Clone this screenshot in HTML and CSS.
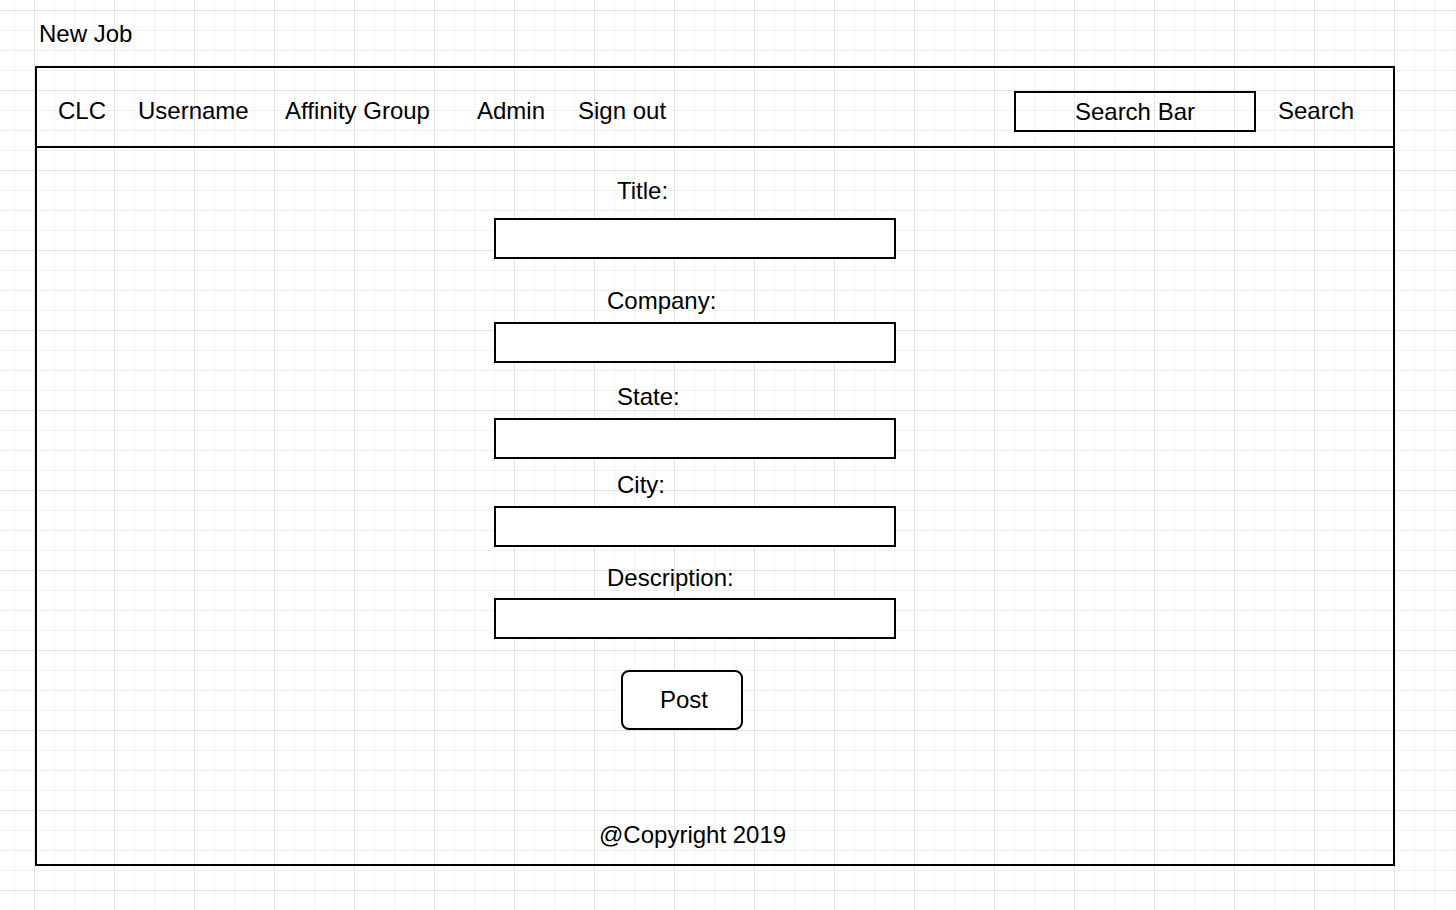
FILE: index.html
```html
<!DOCTYPE html>
<html lang="en">
<head>
<meta charset="UTF-8" />
<meta name="viewport" content="width=device-width, initial-scale=1" />
<title>New Job</title>
<link rel="stylesheet" href="styles.css">
</head>
<body>
<div class="page-title">New Job</div>

<div class="frame">
  <header class="topbar">
    <a class="nav-link nav-clc" href="#">CLC</a>
    <a class="nav-link nav-user" href="#">Username</a>
    <a class="nav-link nav-group" href="#">Affinity Group</a>
    <a class="nav-link nav-admin" href="#">Admin</a>
    <a class="nav-link" href="#">Sign out</a>
    <div class="search-box">Search Bar</div>
    <a class="nav-link search-link" href="#">Search</a>
  </header>

  <main class="content">
    <form class="job-form">
      <div class="field field-title">
        <label class="label-wide">Title:</label>
        <input type="text" class="text-box" />
      </div>
      <div class="field field-company">
        <label>Company:</label>
        <input type="text" class="text-box" />
      </div>
      <div class="field field-state">
        <label class="label-wide">State:</label>
        <input type="text" class="text-box" />
      </div>
      <div class="field field-city">
        <label class="label-wide">City:</label>
        <input type="text" class="text-box" />
      </div>
      <div class="field field-desc">
        <label>Description:</label>
        <input type="text" class="text-box" />
      </div>
      <button type="button" class="post-btn">Post</button>
    </form>

    <footer class="copyright">@Copyright 2019</footer>
  </main>
</div>
</body>
</html>
```

FILE: styles.css
```css
* { box-sizing: border-box; }
html, body { margin: 0; }
body {
  min-height: 100vh;
  padding-top: 20px;
  font-family: "Liberation Sans", Arial, Helvetica, sans-serif;
  font-size: 24px;
  line-height: 28px;
  color: #000;
  background-color: #fff;
  background-image:
    linear-gradient(to right, #e2e2e2 1px, transparent 1px),
    linear-gradient(to bottom, #e2e2e2 1px, transparent 1px),
    linear-gradient(to right, #f2f2f2 1px, transparent 1px),
    linear-gradient(to bottom, #f2f2f2 1px, transparent 1px);
  background-size: 80px 80px, 80px 80px, 20px 20px, 20px 20px;
  background-position: 34px 0, 0 10px, 14px 0, 0 10px;
}

.page-title { padding-left: 39px; }

.frame {
  margin: 18px 0 0 35px;
  width: 1360px;
  height: 800px;
  border: 2px solid #000;
  display: flex;
  flex-direction: column;
}

.topbar {
  height: 80px;
  border-bottom: 2px solid #000;
  padding: 8px 39px 0 21px;
  display: flex;
  align-items: center;
}
.nav-link { color: #000; text-decoration: none; white-space: nowrap; }
.nav-clc { width: 80px; }
.nav-user { width: 147px; }
.nav-group { width: 192px; }
.nav-admin { width: 101px; }

.search-box {
  margin-left: auto;
  width: 242px;
  height: 41px;
  border: 2px solid #000;
  display: flex;
  align-items: center;
  justify-content: center;
  padding-top: 2px;
}
.search-link { margin-left: 22px; }

.content {
  flex: 1;
  display: flex;
  flex-direction: column;
  padding: 29px 0 15px 0;
}

.job-form { margin-left: 457px; width: 402px; }
.field label { display: block; padding-left: 113px; }
.field label.label-wide { padding-left: 123px; }
.text-box {
  display: block;
  width: 402px;
  height: 41px;
  margin-top: 7px;
  border: 2px solid #000;
  border-radius: 0;
  background: #fff;
  font: inherit;
  padding: 0 8px;
}
.field-title .text-box { margin-top: 13px; }
.field-company { margin-top: 28px; }
.field-state { margin-top: 20px; }
.field-city { margin-top: 12px; }
.field-desc { margin-top: 17px; }
.field-desc .text-box { margin-top: 6px; }

.post-btn {
  display: block;
  margin: 31px 0 0 127px;
  width: 122px;
  height: 60px;
  border: 2px solid #000;
  border-radius: 8px;
  background: #fff;
  color: #000;
  font: inherit;
  padding: 0 0 0 4px;
}

.copyright { margin-top: auto; padding-left: 562px; }
```
